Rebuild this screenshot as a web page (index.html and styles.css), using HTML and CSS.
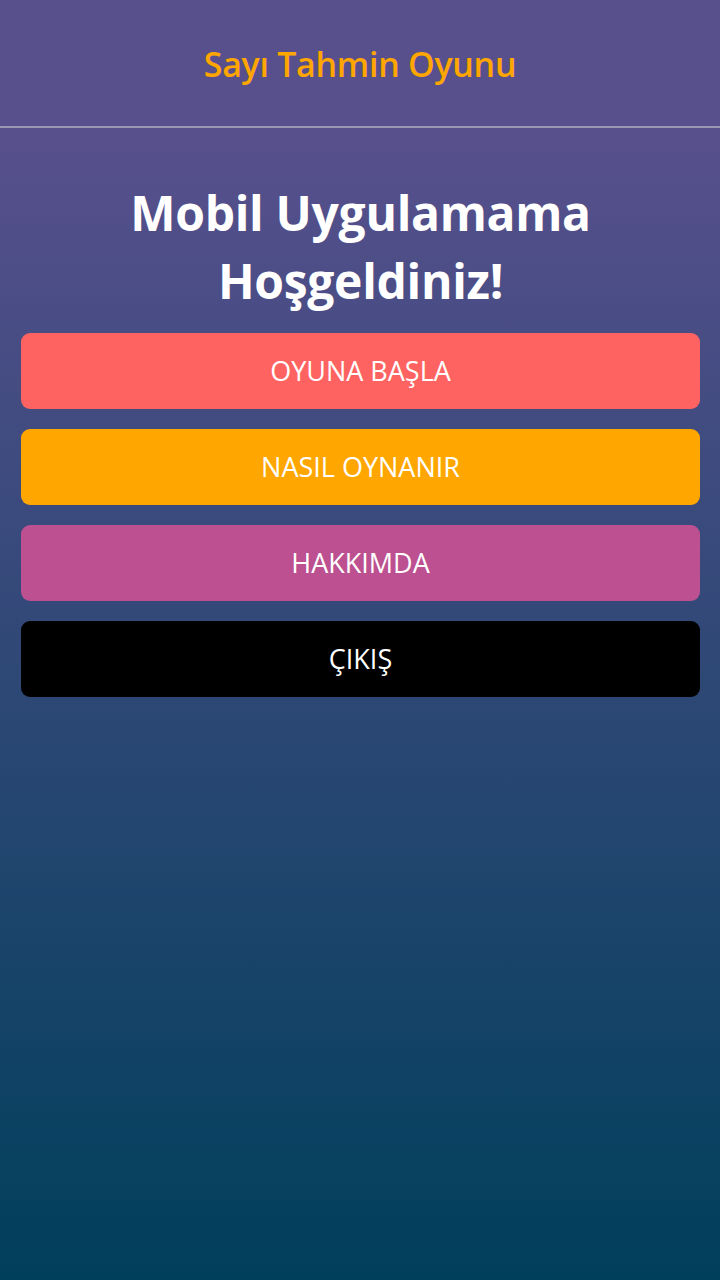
FILE: index.html
```html
<!DOCTYPE html>
<html lang="tr">
<head>
<meta charset="utf-8">
<title>Sayı Tahmin Oyunu</title>
<link rel="stylesheet" href="styles.css">
</head>
<body>
<div class="app">
  <header class="topbar">
    <h1 class="app-title">Sayı Tahmin Oyunu</h1>
  </header>
  <main class="content">
    <h2 class="welcome">Mobil Uygulamama Hoşgeldiniz!</h2>
    <div class="menu">
      <button class="btn btn-start">OYUNA BAŞLA</button>
      <button class="btn btn-howto">NASIL OYNANIR</button>
      <button class="btn btn-about">HAKKIMDA</button>
      <button class="btn btn-exit">ÇIKIŞ</button>
    </div>
  </main>
</div>
</body>
</html>
```
FILE: styles.css
```css
html, body {
  margin: 0;
  padding: 0;
  height: 100%;
}
body {
  font-family: "Open Sans", "Noto Sans", sans-serif;
  background: linear-gradient(to bottom, #58508d 0%, #58508d 10%, #003f5c 100%);
  min-height: 1280px;
}
.app {
  display: flex;
  flex-direction: column;
  min-height: 1280px;
}
.topbar {
  height: 126px;
  display: flex;
  align-items: center;
  justify-content: center;
  border-bottom: 2px solid #9a96b4;
}
.app-title {
  margin: 0;
  font-size: 34px;
  font-weight: 600;
  color: #ffa600;
  letter-spacing: -0.3px;
  transform: translateY(1px);
}
.content {
  padding: 51px 20px 0 21px;
  display: flex;
  flex-direction: column;
}
.welcome {
  margin: 0 auto 18px;
  max-width: 520px;
  text-align: center;
  color: #ffffff;
  font-size: 48px;
  font-weight: 700;
  line-height: 68px;
  letter-spacing: -0.3px;
}
.menu {
  display: flex;
  flex-direction: column;
  gap: 20px;
}
.btn {
  height: 76px;
  border: none;
  border-radius: 9px;
  color: #ffffff;
  font-family: inherit;
  font-size: 27px;
  font-weight: 400;
  letter-spacing: 0;
  padding: 0 0 2px;
  cursor: pointer;
}
.btn-start { background: #ff6361; }
.btn-howto { background: #ffa600; }
.btn-about { background: #bc5090; }
.btn-exit { background: #000000; }
```
